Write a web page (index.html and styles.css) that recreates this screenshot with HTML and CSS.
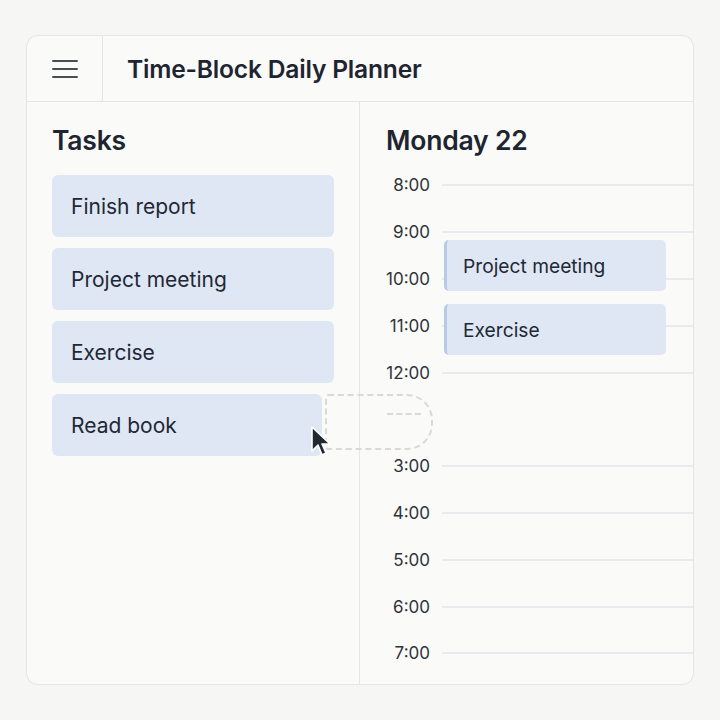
FILE: index.html
```html
<!DOCTYPE html>
<html>

<head>
    <meta charset="utf-8">
    <title>Time-Block Daily Planner</title>
    <link rel="stylesheet" href="styles.css">
</head>

<body>
    <div class="card">
        <div class="topbar">
            <div class="menu">
                <svg width="26" height="20" viewBox="0 0 26 20">
                    <path d="M1 2h24M1 10h24M1 18h24" stroke="#4a4d52" stroke-width="2" stroke-linecap="round" />
                </svg>
            </div>
            <div class="title">Time-Block Daily Planner</div>
        </div>
        <div class="main">
            <div class="tasks">
                <div class="head">Tasks</div>
                <div class="list">
                    <div class="task">Finish report</div>
                    <div class="task">Project meeting</div>
                    <div class="task">Exercise</div>
                    <div class="task short">Read book</div>
                </div>
            </div>
            <div class="day">
                <div class="head">Monday 22</div>
                <div class="timeline">
                    <div class="row"><span class="hour">8:00</span><span class="line"></span></div>
                    <div class="row"><span class="hour">9:00</span><span class="line"></span></div>
                    <div class="row"><span class="hour">10:00</span><span class="line"></span></div>
                    <div class="row"><span class="hour">11:00</span><span class="line"></span></div>
                    <div class="row"><span class="hour">12:00</span><span class="line"></span></div>
                    <div class="row"><span class="hour"></span><span class="line blank"></span></div>
                    <div class="row"><span class="hour">3:00</span><span class="line"></span></div>
                    <div class="row"><span class="hour">4:00</span><span class="line"></span></div>
                    <div class="row"><span class="hour">5:00</span><span class="line"></span></div>
                    <div class="row"><span class="hour">6:00</span><span class="line"></span></div>
                    <div class="row"><span class="hour">7:00</span><span class="line"></span></div>

                    <div class="event ev-meeting">Project meeting</div>
                    <div class="event ev-exercise">Exercise</div>
                </div>
            </div>

            <!-- drag preview of "Read book" -->
            <div class="ghost"><span class="ghost-dash"></span></div>
            <svg class="cursor" width="22" height="32" viewBox="0 0 22 32">
                <path d="M2 2 L2 26 L8 20 L12 30 L16 28 L12 19 L20 19 Z" fill="#1f2a33" stroke="#ffffff" stroke-width="1.6" stroke-linejoin="round" />
            </svg>
        </div>
    </div>
</body>

</html>
```

FILE: styles.css
```css
* {
    margin: 0;
    padding: 0;
    box-sizing: border-box;
}

body {
    background: #f6f6f4;
    padding: 35px 26px 0;
    font-family: Inter, "Noto Sans", sans-serif;
    color: #1f2530;
}

.card {
    width: 668px;
    height: 650px;
    background: #fafaf9;
    border: 1.5px solid #e2e5e9;
    border-radius: 12px;
    overflow: hidden;
    display: flex;
    flex-direction: column;
}

.topbar {
    height: 66px;
    display: flex;
    border-bottom: 1.5px solid #e2e5e9;
}

.menu {
    width: 76px;
    border-right: 1.5px solid #e2e5e9;
    display: flex;
    align-items: center;
    justify-content: center;
}

.title {
    padding-left: 24px;
    display: flex;
    align-items: center;
    font-size: 24.6px;
    font-weight: 600;
    letter-spacing: -0.2px;
}

.main {
    flex: 1;
    display: flex;
    position: relative;
}

.tasks {
    width: 333px;
    border-right: 1.5px solid #e2e5e9;
    padding: 22px 0 0 25px;
}

.head {
    font-size: 26.5px;
    font-weight: 600;
    line-height: 32px;
    letter-spacing: -0.2px;
}

.list {
    margin-top: 19px;
    display: flex;
    flex-direction: column;
    gap: 11px;
}

.task {
    width: 282px;
    height: 62px;
    background: #dfe7f5;
    border-radius: 6px;
    padding-left: 19px;
    display: flex;
    align-items: center;
    font-size: 21px;
    color: #222833;
}

.task.short {
    width: 270px;
}

.day {
    flex: 1;
    padding: 22px 0 0 26px;
}

.timeline {
    margin-top: 6px;
    position: relative;
}

.row {
    height: 46.8px;
    display: flex;
    align-items: center;
}

.hour {
    width: 44px;
    margin-right: 12px;
    text-align: right;
    font-size: 17px;
    color: #2f3338;
}

.line {
    flex: 1;
    height: 2px;
    background: #e8eaed;
}

.line.blank {
    background: transparent;
}

.event {
    position: absolute;
    left: 58px;
    width: 222px;
    height: 51px;
    background: #dfe7f5;
    border-left: 3px solid #b6c9e6;
    border-radius: 5px;
    padding-left: 16px;
    display: flex;
    align-items: center;
    font-size: 19.2px;
    color: #222833;
}

.ev-meeting {
    top: 78px;
}

.ev-exercise {
    top: 142px;
}

.ghost {
    position: absolute;
    left: 298px;
    top: 292px;
    width: 108px;
    height: 56px;
    border: 2.5px dashed #d8d9da;
    border-radius: 3px 26px 26px 3px;
}

.ghost-dash {
    position: absolute;
    left: 60px;
    top: 17px;
    width: 34px;
    border-top: 2.5px dashed #d8d9da;
}

.cursor {
    position: absolute;
    left: 283px;
    top: 323px;
}
```
